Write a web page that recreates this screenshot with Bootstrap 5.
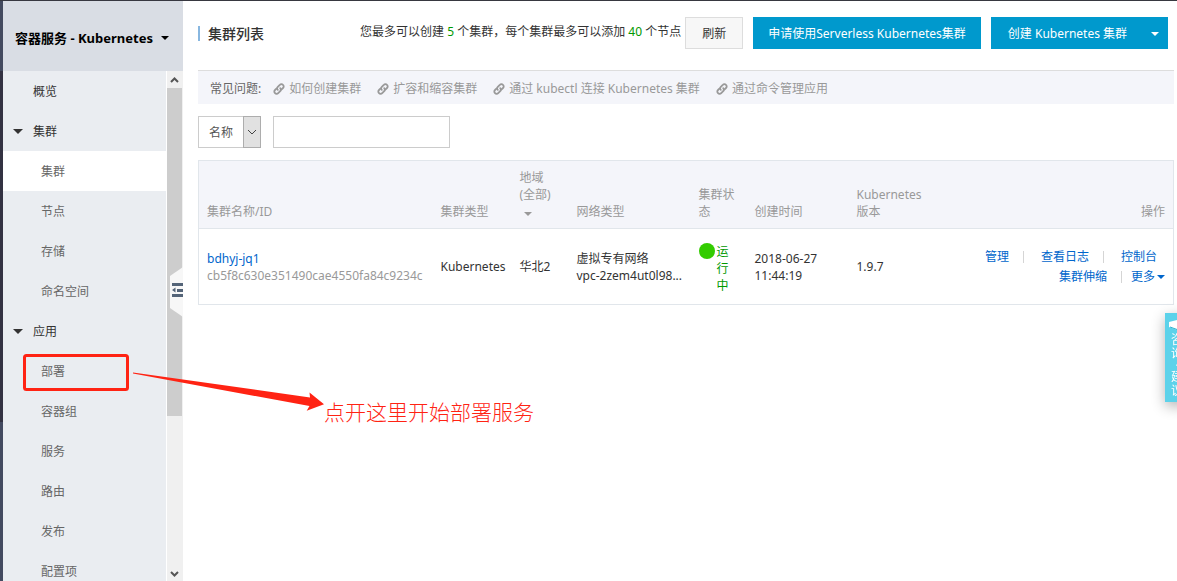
<!DOCTYPE html>
<html lang="zh-CN">
<head>
<meta charset="utf-8">
<meta name="viewport" content="width=device-width, initial-scale=1">
<title>容器服务 - Kubernetes</title>
<link href="https://cdn.jsdelivr.net/npm/bootstrap@5.3.0/dist/css/bootstrap.min.css" rel="stylesheet">
<style>
  body { font: 12px/17px "Noto Sans", "Noto Sans CJK SC", sans-serif; color: #333; background: #fff; --bs-border-radius: 0; }
  a { text-decoration: none; color: #06c; }
  .top-strip { height: 1px; background: #373840; }
  .rail { width: 3px; background: linear-gradient(#434a5f 70px, #333242 70px, #333242 421px, #434a60 421px); }
  .side { width: 180px; }
  .product { height: 70px; padding: 4px 0 0 12px; background: #d9dde4; color: #000; font-size: 13px; font-weight: 700; border: 0; gap: 8px; }
  .tri { width: 0; height: 0; border: 4px solid transparent; border-top-color: currentColor; border-bottom: 0; }
  .side-menu { background: #eaedf1; margin-right: 1px; }
  .side-menu a { height: 40px; padding-left: 38px; color: #666; }
  .side-menu a.group { padding-left: 30px; color: #333; position: relative; }
  .side-menu a.on { background: #fff; }
  .side-menu .group .tri { position: absolute; left: 10px; border-width: 5px 5px 0; }
  .scroller { width: 16px; background: #f0f0f0; }
  .scroller svg { height: 17px; width: 15px; }
  .track { padding-right: 1px; }
  .thumb { height: 69%; background: #cdcdcd; }
  .handle { position: absolute; right: 0; top: 50%; margin-top: -24px; width: 13px; height: 50px; padding: 0; border: 0; background: none; }
  .handle svg { display: block; }
  .content { padding: 0 3px 0 15px; }
  .headline { padding: 16px 6px 21px 0; }
  .page-title { font-size: 14px; line-height: 15px; padding-left: 8px; border-left: 2px solid #88b7e0; }
  .ok { color: #090; }
  .headline .btn { height: 32px; padding: 2px 16px 0; font-size: 12px; line-height: 28px; border-radius: 0; white-space: nowrap; }
  .btn-plain { background: #f7f7f7; border-color: #ddd; color: #333; }
  .btn-main, .btn-main:hover { background: #0099cd; border-color: #0099cd; color: #fff; }
  .headline .btn-main { margin-left: 10px; padding-left: 14px; padding-right: 14px; }
  .headline .btn-split { padding-left: 16px; padding-right: 8px; }
  .faq { height: 34px; padding: 2px 12px 0; border-top: 1px solid #ddd; background: #f4f5fa; color: #666; }
  .faq a { color: #999; display: flex; align-items: center; gap: 4px; margin-right: 16px; }
  .filter { padding: 12px 0; gap: 12px; }
  .filter .box { height: 32px; border: 1px solid #ccc; background: #fff; font-size: 12px; color: #555; padding: 0 10px; appearance: none; }
  .filter select.box { width: 63px; }
  .filter input.box { width: 177px; }
  .drop { position: absolute; right: 0; top: 0; width: 18px; height: 32px; background: #e1e1e1; border: 1px solid #adadad; pointer-events: none; }
  .clusters { table-layout: fixed; width: 100%; border: 1px solid #e1e6eb; }
  .clusters th { font-weight: 400; color: #999; background: #f4f5fa; vertical-align: bottom; padding: 8px; border-bottom: 1px solid #e1e6eb; }
  .clusters td { padding: 10px 8px; vertical-align: middle; }
  .c-name { width: 234px; } .c-type { width: 79px; } .c-area { width: 57px; } .c-net { width: 122px; }
  .c-state { width: 56px; } .c-time { width: 102px; } .c-ver { width: 88px; }
  .sub-id { color: #999; }
  .dot { width: 16px; height: 16px; border-radius: 50%; background: #3c0; }
  .state-text { width: 12px; margin-left: 2px; }
  .ops { line-height: 20px; }
  .ops a + a { margin-left: 14px; padding-left: 18px; background: linear-gradient(#d5d5d5, #d5d5d5) left center / 1px 12px no-repeat; }
  .ops a.more { padding-left: 10px; gap: 2px; }
  .consult { position: fixed; right: -12px; top: 313px; width: 24px; height: 89px; background: #5cd2ea; color: #fff; box-shadow: 0 4px 14px rgba(0,0,0,.3); font-size: 12px; line-height: 14px; padding: 6px 0 0; }
  .consult:hover { color: #fff; }
  .consult .mid { line-height: 9px; }
  .marks { position: absolute; left: 23px; top: 354px; pointer-events: none; }
  .note { position: absolute; left: 324px; top: 399px; font-size: 21px; line-height: 26px; font-weight: 300; color: #ff2313; white-space: nowrap; }
</style>
</head>
<body>
<div class="vh-100 d-flex flex-column overflow-hidden position-relative">
  <div class="top-strip flex-shrink-0"></div>
  <div class="d-flex flex-grow-1 overflow-hidden">
    <div class="rail flex-shrink-0"></div>

    <aside class="side flex-shrink-0 d-flex flex-column position-relative">
      <button class="product flex-shrink-0 d-flex align-items-center" type="button">容器服务 - Kubernetes <span class="tri"></span></button>
      <div class="d-flex flex-grow-1 overflow-hidden">
        <nav class="side-menu flex-grow-1 overflow-hidden">
          <a class="group d-flex align-items-center" href="#">概览</a>
          <a class="group d-flex align-items-center" href="#"><span class="tri"></span>集群</a>
          <a class="on d-flex align-items-center" href="#">集群</a>
          <a class="d-flex align-items-center" href="#">节点</a>
          <a class="d-flex align-items-center" href="#">存储</a>
          <a class="d-flex align-items-center" href="#">命名空间</a>
          <a class="group d-flex align-items-center" href="#"><span class="tri"></span>应用</a>
          <a class="d-flex align-items-center" href="#">部署</a>
          <a class="d-flex align-items-center" href="#">容器组</a>
          <a class="d-flex align-items-center" href="#">服务</a>
          <a class="d-flex align-items-center" href="#">路由</a>
          <a class="d-flex align-items-center" href="#">发布</a>
          <a class="d-flex align-items-center" href="#">配置项</a>
        </nav>
        <div class="scroller d-flex flex-column">
          <svg viewBox="0 0 15 17" fill="none" stroke="#555" stroke-width="2"><path d="M4 11l3.500-3.500 3.500 3.500"/></svg>
          <div class="track flex-grow-1"><div class="thumb"></div></div>
          <svg viewBox="0 0 15 17" fill="none" stroke="#555" stroke-width="2"><path d="M4 8l3.500 3.500 3.500-3.500"/></svg>
        </div>
      </div>
      <button class="handle" type="button" aria-label="收起菜单">
        <svg width="13" height="50" viewBox="0 0 13 50"><path d="M0 9L13 0V50L0 41z" fill="#f7f7f7"/><path d="M2 16h11v3H2zM7 22h6v3H7zM2 27h11v3H2zM5.500 20.500v5L2 23z" fill="#546478"/></svg>
      </button>
    </aside>

    <main class="content flex-grow-1">
      <header class="headline d-flex align-items-center">
        <h1 class="page-title mb-0 me-auto">集群列表</h1>
        <span class="me-1 pb-1">您最多可以创建 <span class="ok">5</span> 个集群，每个集群最多可以添加 <span class="ok">40</span> 个节点</span>
        <button class="btn btn-plain" type="button">刷新</button>
        <button class="btn btn-main" type="button">申请使用Serverless Kubernetes集群</button>
        <button class="btn btn-main btn-split d-flex align-items-center" type="button">创建 Kubernetes 集群 <span class="tri ms-4"></span></button>
      </header>

      <div class="faq d-flex align-items-center">
        <span class="me-2 pe-1">常见问题:</span>
        <a href="#"><svg width="12" height="12"><use href="#chain"/></svg>如何创建集群</a>
        <a href="#"><svg width="12" height="12"><use href="#chain"/></svg>扩容和缩容集群</a>
        <a href="#"><svg width="12" height="12"><use href="#chain"/></svg>通过 kubectl 连接 Kubernetes 集群</a>
        <a href="#"><svg width="12" height="12"><use href="#chain"/></svg>通过命令管理应用</a>
      </div>

      <form class="filter d-flex">
        <div class="position-relative">
          <select class="box" aria-label="筛选条件"><option>名称</option></select>
          <span class="drop d-flex align-items-center justify-content-center"><svg width="10" height="6" fill="none" stroke="#444"><path d="M1 1l4 4 4-4"/></svg></span>
        </div>
        <input class="box" type="text" aria-label="名称">
      </form>

      <table class="clusters">
        <colgroup><col class="c-name"><col class="c-type"><col class="c-area"><col class="c-net"><col class="c-state"><col class="c-time"><col class="c-ver"><col></colgroup>
        <thead>
          <tr><th>集群名称/ID</th><th>集群类型</th><th>地域<br>(全部)<br><span class="tri d-inline-block ms-1 mb-1 align-bottom"></span></th><th>网络类型</th><th>集群状态</th><th>创建时间</th><th>Kubernetes 版本</th><th class="text-end">操作</th></tr>
        </thead>
        <tbody>
          <tr>
            <td><a href="#">bdhyj-jq1</a><div class="sub-id">cb5f8c630e351490cae4550fa84c9234c</div></td>
            <td>Kubernetes</td>
            <td>华北2</td>
            <td>虚拟专有网络<div>vpc-2zem4ut0l98...</div></td>
            <td><div class="d-flex pt-1"><span class="dot flex-shrink-0"></span><span class="state-text ok">运行中</span></div></td>
            <td>2018-06-27 11:44:19</td>
            <td>1.9.7</td>
            <td>
              <div class="ops d-flex justify-content-end pe-2"><a href="#">管理</a><a href="#">查看日志</a><a href="#">控制台</a></div>
              <div class="ops d-flex justify-content-end"><a href="#">集群伸缩</a><a class="more d-flex align-items-center" href="#">更多<span class="tri"></span></a></div>
            </td>
          </tr>
        </tbody>
      </table>
    </main>
  </div>

  <svg class="marks" width="304" height="60" fill="#ff2313">
    <rect x="1.500" y="1.500" width="103" height="34" rx="2" fill="none" stroke="#ff2313" stroke-width="3"/>
    <path d="M110 18.500L287 43.500 286.500 38.500 301 50.300 283.700 56.700 286.500 52 110 19.500z"/>
  </svg>
  <div class="note">点开这里开始部署服务</div>

  <a class="consult d-flex flex-column align-items-center" href="#">
    <svg class="flex-shrink-0" width="16" height="14" viewBox="0 0 16 14" fill="#fff"><path d="M0 3l8-2 8 2v5l-8 3-8-3z"/><path d="M1 8l7 2.500L15 8" fill="none" stroke="#2bb3d0"/></svg>
    <span>咨</span><span>询</span><span class="mid">·</span><span>建</span><span>议</span>
  </a>
</div>

<svg class="d-none">
  <symbol id="chain" viewBox="0 0 12 12"><g fill="none" stroke="#999" stroke-width="1.800" stroke-linecap="round"><path d="M4.800 6.800C3.600 5.600 4 4.600 4.800 3.800L6.800 1.800a2.200 2.200 0 0 1 3.200 0 2.200 2.200 0 0 1 0 3.200L8.600 6.400"/><path d="M7.200 5.200C8.400 6.400 8 7.400 7.200 8.200L5.200 10.200a2.200 2.200 0 0 1-3.200 0 2.200 2.200 0 0 1 0-3.200L3.400 5.600"/></g></symbol>
</svg>
<script src="https://cdn.jsdelivr.net/npm/bootstrap@5.3.0/dist/js/bootstrap.bundle.min.js"></script>
</body>
</html>
